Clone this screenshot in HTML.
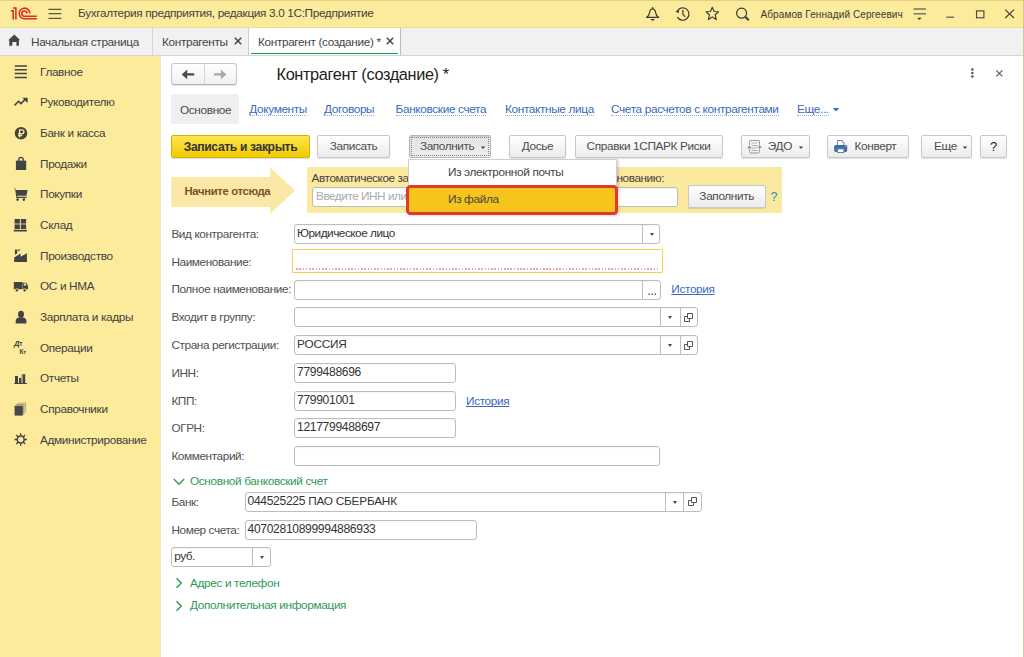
<!DOCTYPE html>
<html><head><meta charset="utf-8">
<style>
*{box-sizing:border-box;margin:0;padding:0}
html,body{width:1024px;height:657px;overflow:hidden;background:#fff;font-family:"Liberation Sans",sans-serif;font-size:11.8px;letter-spacing:-0.35px;color:#404040}
.a{position:absolute;white-space:nowrap}
#top{position:absolute;left:0;top:0;width:1024px;height:28px;background:#fbeb9b;border-top:1px solid #e2d283;border-bottom:1px solid #eadc98}
#tabs{position:absolute;left:0;top:28px;width:1024px;height:28px;background:#f1f1f1;border-bottom:1px solid #d4d4d4}
#side{position:absolute;left:0;top:56px;width:160px;height:601px;background:#fbeb9b}
#main{position:absolute;left:160px;top:56px;width:864px;height:601px;background:#fff;border-left:1px solid #ece7c8;border-right:1px solid #d5c98e}
#rb{position:absolute;left:1023px;top:0;width:1px;height:657px;background:#d5c98e}
.si{position:absolute;left:40px;font-size:11.8px;letter-spacing:-0.35px;color:#424242}
.ic{position:absolute}
.btn{position:absolute;height:23px;border:1px solid #c8c8c8;border-radius:2px;background:linear-gradient(#ffffff,#ececec);box-shadow:0 1px 1px rgba(0,0,0,.12);color:#4d4d4d;font-size:11.8px;letter-spacing:-0.35px;line-height:21px;text-align:center;white-space:nowrap}
.lnk{position:absolute;color:#3a69bd;font-size:11.8px;letter-spacing:-0.35px;white-space:nowrap;border-bottom:1px dotted #97acd6;line-height:10.5px}
.lbl{position:absolute;left:171.4px;color:#505050;font-size:11.8px;letter-spacing:-0.4px;white-space:nowrap;line-height:13px}
.fld{position:absolute;height:20px;border:1px solid #bdbdbd;border-radius:3px;background:#fff;color:#333;font-size:11.8px;letter-spacing:-0.48px;line-height:16.6px;padding-left:2px;white-space:nowrap;box-shadow:inset 0 1px 1px rgba(0,0,0,.04)}
.dd{position:absolute;top:0;bottom:0;width:19px;border-left:1px solid #bdbdbd}
.dd:after{content:"";position:absolute;left:7px;top:8px;border-left:2.5px solid transparent;border-right:2.5px solid transparent;border-top:3px solid #444}
.grn{position:absolute;color:#2e9a57;font-size:11.8px;letter-spacing:-0.35px;white-space:nowrap;line-height:13px}
.cp{position:absolute;top:0;bottom:0;width:19px;border-left:1px solid #bdbdbd}
.eb{position:absolute;top:0;bottom:0;width:19px;border-left:1px solid #bdbdbd}
</style></head><body>
<div id="top"></div>
<div id="tabs"></div>
<div id="side"></div>
<div id="main"></div>
<div id="rb"></div>
<!-- TOP BAR -->
<svg class="ic" style="left:8px;top:4px" width="32" height="20" viewBox="0 0 32 20" fill="none" stroke="#dc2a22" stroke-width="1.55">
<path d="M2.9 6.7H5.2V15.4M5 3.9H7.9V15.4"/>
<path d="M21.8 9.4A5.3 5.3 0 1 0 16.5 14.75H28.8"/>
<path d="M19.05 9.6A2.65 2.65 0 1 0 16.4 12.25H28.8"/>
</svg>
<svg class="ic" style="left:48px;top:8px" width="14" height="12" viewBox="0 0 14 12" stroke="#58584c" stroke-width="1.3"><path d="M0.5 1.3H13.3M0.5 5.7H13.3M0.5 10.4H13.3"/></svg>
<div class="a" style="left:78px;top:7.4px;font-size:11.8px;letter-spacing:-0.35px;line-height:13px;color:#444">Бухгалтерия предприятия, редакция 3.0 1С:Предприятие</div>
<!-- bell -->
<svg class="ic" style="left:645px;top:2px" width="16" height="21" viewBox="0 0 16 21" fill="none" stroke="#3a3a3a" stroke-width="1.2" stroke-linejoin="round">
<path d="M1.6 15.3H13.6Q11 13.6 10.6 10.6Q10.3 7 7.6 7Q4.9 7 4.6 10.6Q4.2 13.6 1.6 15.3Z"/><path d="M6.8 6.6L7.6 5.1L8.4 6.6Z" fill="#3a3a3a" stroke-width="0.6"/><path d="M5.5 17.1H9.7Q9.2 18.7 7.6 18.7Q6 18.7 5.5 17.1Z" fill="#3a3a3a" stroke="none"/>
</svg>
<!-- history -->
<svg class="ic" style="left:674px;top:5px" width="17" height="17" viewBox="0 0 17 17" fill="none" stroke="#3a3a3a" stroke-width="1.2">
<path d="M3.4 12.1A6.2 6.2 0 1 0 3.5 5.8"/><path d="M1.5 6.5L5.1 4.6L4.7 8.3Z" fill="#3a3a3a" stroke="none"/><path d="M8.9 4.9V9.3L11.3 11.8"/>
</svg>
<!-- star -->
<svg class="ic" style="left:705px;top:6px" width="15" height="15" viewBox="0 0 15 15" fill="none" stroke="#3c3c3c" stroke-width="1.15" stroke-linejoin="round">
<path d="M7.3 1.3L9.1 5.5L13.5 5.8L10.2 8.8L11.2 13.6L7.3 11.1L3.4 13.6L4.4 8.8L1.1 5.8L5.5 5.5Z"/>
</svg>
<!-- search -->
<svg class="ic" style="left:735px;top:7px" width="16" height="15" viewBox="0 0 16 15" fill="none" stroke="#3c3c3c">
<circle cx="6.6" cy="6.2" r="5" stroke-width="1.2"/><path d="M10.2 9.8L13.8 13.2" stroke-width="2"/>
</svg>
<div class="a" style="left:760.5px;top:8.6px;font-size:10px;line-height:12px;letter-spacing:0.1px;color:#3a3a3a">Абрамов Геннадий Сергеевич</div>
<!-- filter -->
<svg class="ic" style="left:912px;top:7px" width="16" height="15" viewBox="0 0 16 15" fill="none">
<path d="M1.5 2H14" stroke="#555" stroke-width="1.2"/><path d="M1.5 6.8H14" stroke="#7a7866" stroke-width="1.5"/><path d="M5.2 10.8H9.6L7.4 13Z" fill="#333"/>
</svg>
<svg class="ic" style="left:946px;top:16px" width="9" height="3" viewBox="0 0 9 3" stroke="#555" stroke-width="1.2"><path d="M0.3 1.2H8"/></svg>
<svg class="ic" style="left:975px;top:9px" width="11" height="11" viewBox="0 0 11 11" fill="none" stroke="#444" stroke-width="1.1"><rect x="1.5" y="1.9" width="7.4" height="6.9"/></svg>
<svg class="ic" style="left:1004px;top:9px" width="11" height="11" viewBox="0 0 11 11" stroke="#444" stroke-width="1.2"><path d="M1.2 0.6L10 9M10 0.6L1.2 9"/></svg>
<!-- TABS -->
<svg class="ic" style="left:8px;top:34px" width="13" height="12" viewBox="0 0 13 12" fill="#444">
<path d="M6.3 0.4L12.2 6.3H10.9V11.8H8.4V8H4.3V11.8H1.3V6.3H0.3Z"/>
</svg>
<div class="a" style="left:31px;top:35.5px;font-size:11.8px;letter-spacing:-0.35px;line-height:13px;color:#444">Начальная страница</div>
<div class="a" style="left:152px;top:28px;width:1px;height:27px;background:#d6d6d6"></div>
<div class="a" style="left:162px;top:35.5px;font-size:11.8px;letter-spacing:-0.35px;line-height:13px;color:#444">Контрагенты</div>
<svg class="ic" style="left:234px;top:37px" width="8" height="8" viewBox="0 0 8 8" stroke="#444" stroke-width="1.5"><path d="M0.8 0.8L7.2 7.2M7.2 0.8L0.8 7.2"/></svg>
<div class="a" style="left:248px;top:28px;width:1px;height:27px;background:#cfcfcf"></div>
<div class="a" style="left:249px;top:28px;width:151px;height:27px;background:#fff"></div>
<div class="a" style="left:251px;top:52.5px;width:147px;height:1.5px;background:#10a04a"></div>
<div class="a" style="left:400px;top:28px;width:1px;height:27px;background:#bdbdbd"></div>
<div class="a" style="left:258px;top:35.5px;font-size:11.8px;letter-spacing:-0.35px;line-height:13px;color:#444">Контрагент (создание) *</div>
<svg class="ic" style="left:386px;top:37px" width="8" height="8" viewBox="0 0 8 8" stroke="#444" stroke-width="1.5"><path d="M0.8 0.8L7.2 7.2M7.2 0.8L0.8 7.2"/></svg>
<!-- SIDEBAR -->
<div class="si" style="top:65.79px;line-height:13px">Главное</div>
<div class="si" style="top:96.46px;line-height:13px">Руководителю</div>
<div class="si" style="top:127.13px;line-height:13px">Банк и касса</div>
<div class="si" style="top:157.80px;line-height:13px">Продажи</div>
<div class="si" style="top:188.47px;line-height:13px">Покупки</div>
<div class="si" style="top:219.14px;line-height:13px">Склад</div>
<div class="si" style="top:249.81px;line-height:13px">Производство</div>
<div class="si" style="top:280.48px;line-height:13px">ОС и НМА</div>
<div class="si" style="top:311.15px;line-height:13px">Зарплата и кадры</div>
<div class="si" style="top:341.82px;line-height:13px">Операции</div>
<div class="si" style="top:372.49px;line-height:13px">Отчеты</div>
<div class="si" style="top:403.16px;line-height:13px">Справочники</div>
<div class="si" style="top:433.83px;line-height:13px">Администрирование</div>
<svg class="ic" style="left:0;top:56px" width="40" height="400" viewBox="0 56 40 400" fill="#434343">
<!-- list -->
<g stroke="#434343" stroke-width="1.5"><path d="M14.7 65.9H26.9M14.7 69.8H26.9M14.7 73.6H26.9M14.7 77.4H26.9"/></g>
<!-- trend -->
<path d="M14.6 105.4L18.5 101.3L21 103.6L25.3 99.2" fill="none" stroke="#434343" stroke-width="1.6"/><path d="M22.3 97.7H27.6V103Z"/>
<!-- ruble -->
<circle cx="21" cy="133.25" r="6.2"/>
<path d="M19.6 137.6V129.8H22A1.9 1.9 0 0 1 22 133.6H18.1M18.1 135.5H22.2" fill="none" stroke="#fbeb9b" stroke-width="1.3"/>
<!-- bag -->
<path d="M15.9 160.6H26.2V170H15.9Z"/><path d="M18.8 161V159.5A2.2 2.2 0 0 1 23.2 159.5V161" fill="none" stroke="#434343" stroke-width="1.3"/>
<!-- cart -->
<path d="M13.7 188.5H15.6L16.6 195.8H26.4L27.7 190.1H15.9Z"/><path d="M15.8 190L16.9 197.4H26.6" fill="none" stroke="#434343" stroke-width="1.1"/>
<circle cx="17.6" cy="199.6" r="1.3"/><circle cx="23.9" cy="199.6" r="1.3"/>
<!-- warehouse -->
<rect x="14.6" y="219" width="5.3" height="4.6"/><rect x="20.8" y="219" width="5.3" height="4.6"/><rect x="14.6" y="224.4" width="5.3" height="4.6"/><rect x="20.8" y="224.4" width="5.3" height="4.6"/><rect x="13.8" y="229.8" width="13.1" height="1.7"/>
<!-- factory -->
<path d="M14.2 261.9V257.5L20.6 253.6V256.8L26.9 253.2V261.9Z"/><path d="M14.9 249.5H17.3V253.3L14.9 254.8Z"/><path d="M18.1 249.5H20.9L18.1 251.5Z"/>
<!-- truck -->
<rect x="13.8" y="282" width="8.8" height="7.2"/><path d="M22.9 282.8H26.2L28 285.4V289.2H22.9Z"/><path d="M23.8 283.6H25.7L26.6 285.6H23.8Z" fill="#fbeb9b"/>
<circle cx="16.8" cy="290.3" r="1.6" stroke="#fbeb9b" stroke-width="0.8"/><circle cx="24.6" cy="290.3" r="1.6" stroke="#fbeb9b" stroke-width="0.8"/>
<!-- person -->
<ellipse cx="21" cy="314.3" rx="3" ry="3.6"/><path d="M15.7 323.4V321A3.8 3.8 0 0 1 19.5 317.4H22.6A3.8 3.8 0 0 1 26.4 321V323.4Z"/>
<!-- Dt Kt -->
<text x="14" y="346.4" font-family="Liberation Sans" font-weight="700" font-size="7.6" fill="#434343"><tspan font-style="italic">Д</tspan><tspan font-size="6.4">т</tspan></text>
<text x="19.6" y="353.9" font-family="Liberation Sans" font-weight="700" font-size="6.6" fill="#434343">К<tspan font-size="6">т</tspan></text>
<!-- bars -->
<rect x="15" y="376" width="3" height="7.4"/><rect x="19" y="378" width="2.4" height="5.4"/><rect x="21.4" y="374.2" width="1.6" height="9.2" fill="#9d9878"/><rect x="23" y="374.2" width="2.2" height="9.2"/><rect x="14.2" y="383" width="12.7" height="1"/>
<!-- books -->
<rect x="17.4" y="402.3" width="8.8" height="10.2" fill="#b9b083" stroke="#fbeb9b" stroke-width="0.5"/><rect x="15.8" y="404" width="8.8" height="10.2" fill="#85816a" stroke="#fbeb9b" stroke-width="0.5"/><rect x="14.2" y="405.7" width="8.9" height="10.2" fill="#474747" stroke="#fbeb9b" stroke-width="0.5"/>
<!-- gear -->
<g transform="translate(20.7 439.5)"><circle r="3.5" fill="none" stroke="#434343" stroke-width="1.6"/>
<g stroke="#434343" stroke-width="1.35"><path d="M0 -6.2V-3.8M0 6.2V3.8M-6.2 0H-3.8M6.2 0H3.8M-4.4 -4.4L-2.7 -2.7M4.4 4.4L2.7 2.7M-4.4 4.4L-2.7 2.7M4.4 -4.4L2.7 -2.7"/></g></g>
</svg>
<!-- FORM HEADER -->
<div class="a" style="left:171px;top:63px;width:66px;height:22px;border:1px solid #c6c6c6;border-bottom-color:#b0b0b0;border-radius:3px;background:linear-gradient(#fefefe,#f1f1f1);box-shadow:0 1px 1px rgba(0,0,0,.10)"></div>
<div class="a" style="left:204px;top:64px;width:1px;height:20px;background:#d4d4d4"></div>
<svg class="ic" style="left:180px;top:68px" width="16" height="13" viewBox="0 0 16 13"><path d="M1.7 6.4L7.2 1.6V5.3H14.2V7.5H7.2V11.2Z" fill="#4a4a4a"/></svg>
<svg class="ic" style="left:212px;top:68px" width="16" height="13" viewBox="0 0 16 13"><path d="M14.3 6.4L8.9 1.6V5.3H1.9V7.5H8.9V11.2Z" fill="#a9a9a9"/></svg>
<div class="a" style="left:276.5px;top:65.2px;font-size:16.3px;line-height:19px;color:#222">Контрагент (создание) *</div>
<svg class="ic" style="left:969px;top:66px" width="7" height="14" viewBox="0 0 7 14" fill="#555"><circle cx="3.4" cy="3.4" r="1.25"/><circle cx="3.4" cy="7" r="1.25"/><circle cx="3.4" cy="10.6" r="1.25"/></svg>
<svg class="ic" style="left:995px;top:69px" width="9" height="9" viewBox="0 0 9 9" stroke="#555" stroke-width="1.1"><path d="M1.3 1.3L7.4 7.4M7.4 1.3L1.3 7.4"/></svg>
<!-- form tabs -->
<div class="a" style="left:171px;top:94px;width:68px;height:30px;background:#efefef;border-radius:3px"></div>
<div class="a" style="left:180px;top:103.6px;line-height:13px;color:#4a4a4a">Основное</div>
<div class="lnk" style="left:249.3px;top:104px">Документы</div>
<div class="lnk" style="left:324px;top:104px">Договоры</div>
<div class="lnk" style="left:395.6px;top:104px">Банковские счета</div>
<div class="lnk" style="left:505px;top:104px">Контактные лица</div>
<div class="lnk" style="left:611px;top:104px">Счета расчетов с контрагентами</div>
<div class="lnk" style="left:797px;top:104px">Еще...</div>
<svg class="ic" style="left:832px;top:106.5px" width="8" height="6" viewBox="0 0 8 6"><path d="M0.8 1H7.4L4.1 4.6Z" fill="#3a69bd"/></svg>
<!-- COMMAND BAR -->
<div class="btn" style="left:171px;top:135px;width:139px;border-color:#d4b300;background:linear-gradient(#fde54f,#f3cb00);color:#33333a;font-weight:bold;font-size:12.1px;letter-spacing:-0.35px;line-height:22px">Записать и закрыть</div>
<div class="btn" style="left:317px;top:135px;width:73px">Записать</div>
<div class="btn" style="left:409px;top:135px;width:82px;background:linear-gradient(#e4e4e4,#ececec);border-color:#b8b8b8;box-shadow:inset 0 1px 2px rgba(0,0,0,.12)"><div style="position:absolute;left:1px;top:1px;right:1px;bottom:1px;border:1px dotted #8a8a8a"></div><span style="position:absolute;left:10px;top:0;letter-spacing:-0.42px">Заполнить</span><svg style="position:absolute;left:70px;top:10px" width="6" height="4" viewBox="0 0 6 4"><path d="M0.8 0.6H5.2L3 3Z" fill="#444"/></svg></div>
<div class="btn" style="left:509px;top:135px;width:57px">Досье</div>
<div class="btn" style="left:574.5px;top:135px;width:148px">Справки 1СПАРК Риски</div>
<div class="btn" style="left:741px;top:135px;width:68.5px"><svg style="position:absolute;left:5px;top:3px" width="16" height="16" viewBox="0 0 16 16" fill="none"><path d="M2.5 6.2V3A1.5 1.5 0 0 1 4 1.5H11A1.5 1.5 0 0 1 12.5 3V6.6M2.5 9.6V12.5A1.5 1.5 0 0 0 4 14H11A1.5 1.5 0 0 0 12.5 12.5V10.2" stroke="#999" stroke-width="1"/><path d="M4.5 4H10.5M4.5 6.5H10.5M4.5 9H10.5M4.5 11.5H10.5" stroke="#b0b0b0" stroke-width="1"/><path d="M0.1 9.3H4.7L2.4 6.5Z" fill="#8a8a8a"/><path d="M10.4 7.3H15L12.7 10.1Z" fill="#8a8a8a"/></svg><span style="position:absolute;left:25.8px;top:0">ЭДО</span><svg style="position:absolute;left:55.5px;top:10px" width="6" height="4" viewBox="0 0 6 4"><path d="M0.8 0.6H5.2L3 3Z" fill="#444"/></svg></div>
<div class="btn" style="left:827px;top:135px;width:82px"><svg style="position:absolute;left:6px;top:3px" width="14" height="15" viewBox="0 0 14 15"><path d="M3.6 6.2V1.5H8.1L9.8 3.2V6.2" fill="#fff" stroke="#6584aa" stroke-width="1"/><path d="M8.2 1.8V3.4H9.8" fill="none" stroke="#8fa6c2" stroke-width="0.8"/><rect x="0.2" y="6" width="13" height="6.9" rx="1.6" fill="#416c9f"/><path d="M10.6 7.6H12" stroke="#c9d6e6" stroke-width="0.7"/><rect x="3.6" y="9.9" width="6.3" height="3.6" fill="#fff" stroke="#6584aa" stroke-width="1"/></svg><span style="position:absolute;left:26.5px;top:0">Конверт</span></div>
<div class="btn" style="left:921px;top:135px;width:51px"><span style="position:absolute;left:12px;top:0">Еще</span><svg style="position:absolute;left:39.5px;top:10px" width="6" height="4" viewBox="0 0 6 4"><path d="M0.8 0.6H5.2L3 3Z" fill="#444"/></svg></div>
<div class="btn" style="left:980px;top:135px;width:27px;font-weight:normal;font-size:13px;color:#222">?</div>
<!-- START ARROW -->
<svg class="ic" style="left:171px;top:167px" width="125" height="48" viewBox="171 167 125 48"><path d="M171.2 177H270V167.5L295.2 190.6L270 213.8V207H171.2Z" fill="#fbe7a6"/></svg>
<div class="a" style="left:184.5px;top:185px;font-size:11.3px;line-height:13px;font-weight:bold;color:#7a5226">Начните отсюда</div>
<!-- yellow panel -->
<div class="a" style="left:307px;top:167px;width:475px;height:46px;background:#fbe9a0"></div>
<div class="a" style="left:311.5px;top:171.8px;line-height:13px;color:#444;letter-spacing:-0.42px">Автоматическое заполнение реквизитов по ИНН или наименованию:</div>
<div class="fld" style="left:311.5px;top:187px;width:366px;height:19.5px;color:#aaa;padding-left:3.5px">Введите ИНН или наименование</div>
<div class="btn" style="left:688px;top:185px;width:77.5px;height:23px">Заполнить</div>
<div class="a" style="left:770.5px;top:189.5px;font-size:12.5px;line-height:14px;font-weight:normal;color:#2a8ac6">?</div>
<!-- DROPDOWN MENU -->
<div class="a" style="left:408px;top:158.5px;width:209px;height:56px;background:#fff;border:1px solid #cfcfcf;box-shadow:2px 1px 2px rgba(0,0,0,.15)"></div>
<div class="a" style="left:448px;top:166.3px;line-height:13px;color:#444">Из электронной почты</div>
<div class="a" style="left:405.8px;top:185.3px;width:212.4px;height:29.9px;background:#f6c51b;border:3px solid #e2392d;border-radius:4.5px"></div>
<div class="a" style="left:448px;top:192.8px;line-height:13px;color:#444">Из файла</div>
<!-- FIELDS -->
<div class="lbl" style="top:227.5px">Вид контрагента:</div>
<div class="fld" style="left:294px;top:224px;width:366px">Юридическое лицо<div class="dd" style="left:347px"></div></div>
<div class="lbl" style="top:255.5px">Наименование:</div>
<div class="a" style="left:292.2px;top:249.2px;width:370.8px;height:24.2px;border:1.8px solid #f8cf48;border-radius:1px;background:#fff"></div>
<div class="a" style="left:296px;top:268.2px;width:364px;height:1.7px;background:repeating-linear-gradient(90deg,#f3a0a0 0 1.6px,transparent 1.6px 3.25px)"></div>
<div class="lbl" style="top:283px">Полное наименование:</div>
<div class="fld" style="left:294px;top:279.5px;width:366.5px"><div class="eb" style="left:347px"><svg style="position:absolute;left:5px;top:12px" width="9" height="3" viewBox="0 0 9 3" fill="#333"><rect x="0.5" y="0.5" width="1.3" height="1.3"/><rect x="3.6" y="0.5" width="1.3" height="1.3"/><rect x="6.7" y="0.5" width="1.3" height="1.3"/></svg></div></div>
<div class="a" style="left:671.3px;top:283px;line-height:13px;color:#3a69bd;text-decoration:underline;text-decoration-skip-ink:none">История</div>
<div class="lbl" style="top:311px">Входит в группу:</div>
<div class="fld" style="left:294px;top:307.3px;width:403.5px"><div class="dd" style="left:365px"></div><div class="cp" style="left:384.5px"><svg style="position:absolute;left:3.5px;top:4.5px" width="10" height="10" viewBox="0 0 10 10" fill="none" stroke="#555" stroke-width="1"><path d="M3.5 0.5H8.5V5.5H3.5Z"/><path d="M3.5 3.5H0.5V8.5H5.5V5.5"/></svg></div></div>
<div class="lbl" style="top:338.7px">Страна регистрации:</div>
<div class="fld" style="left:294px;top:335px;width:403.5px"><span style="letter-spacing:-0.2px">РОССИЯ</span><div class="dd" style="left:365px"></div><div class="cp" style="left:384.5px"><svg style="position:absolute;left:3.5px;top:4.5px" width="10" height="10" viewBox="0 0 10 10" fill="none" stroke="#555" stroke-width="1"><path d="M3.5 0.5H8.5V5.5H3.5Z"/><path d="M3.5 3.5H0.5V8.5H5.5V5.5"/></svg></div></div>
<div class="lbl" style="top:366.5px">ИНН:</div>
<div class="fld" style="left:294px;top:362.5px;width:161.5px"><span style="font-size:12.1px;letter-spacing:-0.33px">7799488696</span></div>
<div class="lbl" style="top:394.5px">КПП:</div>
<div class="fld" style="left:294px;top:390.5px;width:161.5px"><span style="font-size:12.1px;letter-spacing:-0.33px">779901001</span></div>
<div class="a" style="left:466px;top:394.5px;line-height:13px;color:#3a69bd;text-decoration:underline;text-decoration-skip-ink:none">История</div>
<div class="lbl" style="top:422.3px">ОГРН:</div>
<div class="fld" style="left:294px;top:418.3px;width:161.5px"><span style="font-size:12.1px;letter-spacing:-0.33px">1217799488697</span></div>
<div class="lbl" style="top:450px">Комментарий:</div>
<div class="fld" style="left:294px;top:446.3px;width:366px"></div>
<!-- bank section -->
<svg class="ic" style="left:172px;top:476px" width="14" height="10" viewBox="0 0 14 10"><path d="M1.8 3L7 8.2L12.2 3" fill="none" stroke="#2e9a57" stroke-width="1.4"/></svg>
<div class="grn" style="left:190px;top:475.2px">Основной банковский счет</div>
<div class="lbl" style="top:496px">Банк:</div>
<div class="fld" style="left:244.5px;top:491.8px;width:457px"><span style="font-size:12.1px;letter-spacing:-0.33px">044525225</span><span style="letter-spacing:-0.22px"> ПАО СБЕРБАНК</span><div class="dd" style="left:419px"></div><div class="cp" style="left:437.5px"><svg style="position:absolute;left:3.5px;top:4.5px" width="10" height="10" viewBox="0 0 10 10" fill="none" stroke="#555" stroke-width="1"><path d="M3.5 0.5H8.5V5.5H3.5Z"/><path d="M3.5 3.5H0.5V8.5H5.5V5.5"/></svg></div></div>
<div class="lbl" style="top:523.5px">Номер счета:</div>
<div class="fld" style="left:244.5px;top:519.8px;width:232.5px"><span style="font-size:12.1px;letter-spacing:-0.33px">40702810899994886933</span></div>
<div class="fld" style="left:171.3px;top:547.3px;width:99.5px">руб.<div class="dd" style="left:80px;width:19px"></div></div>
<svg class="ic" style="left:172px;top:576px" width="12" height="14" viewBox="0 0 12 14"><path d="M4.5 2.2L9.3 7L4.5 11.8" fill="none" stroke="#2e9a57" stroke-width="1.4"/></svg>
<div class="grn" style="left:190px;top:576.5px">Адрес и телефон</div>
<svg class="ic" style="left:172px;top:599px" width="12" height="14" viewBox="0 0 12 14"><path d="M4.5 2.2L9.3 7L4.5 11.8" fill="none" stroke="#2e9a57" stroke-width="1.4"/></svg>
<div class="grn" style="left:190px;top:599px">Дополнительная информация</div>
</body></html>
